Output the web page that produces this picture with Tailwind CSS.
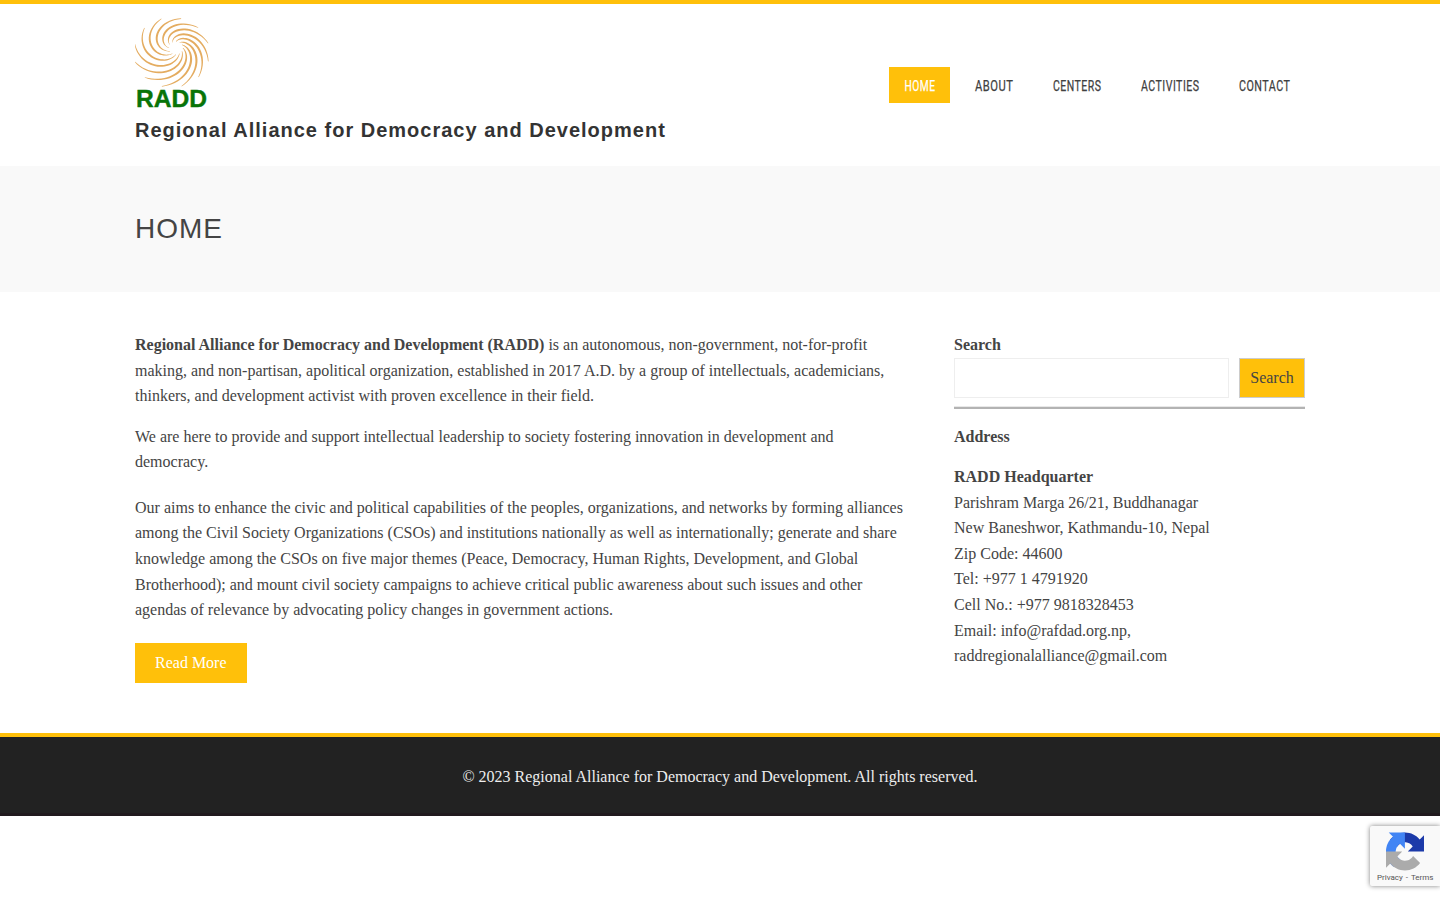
<!DOCTYPE html>
<html lang="en">
<head>
<meta charset="utf-8">
<title>Regional Alliance for Democracy and Development</title>
<script src="https://cdn.jsdelivr.net/npm/@tailwindcss/browser@4"></script>
</head>
<body class="relative h-[900px] overflow-hidden bg-white font-['Liberation_Serif',serif] text-[16px] leading-[25.6px] text-[#444]">
<header class="h-[166px] border-t-4 border-[#ffc00a]">
  <div class="mx-auto flex w-[1170px] justify-between">
    <div class="pt-[14px]">
      <svg class="block" width="74" height="91" viewBox="0 0 74 91">
        <g id="swirl" fill="#e4ac60"></g>
        <text x="1" y="88.500" textLength="71" lengthAdjust="spacingAndGlyphs" class="fill-[#087408] font-['Liberation_Sans',sans-serif] text-[23.5px] font-bold" stroke="#087408" stroke-width=".4">RADD</text>
      </svg>
      <h1 class="mt-[6px] font-['Liberation_Sans',sans-serif] text-[20px] leading-[30px] font-bold tracking-[1px] text-[#333]">Regional Alliance for Democracy and Development</h1>
    </div>
    <nav class="mt-[63px] flex h-9 gap-[10px] font-['Roboto',sans-serif] text-[15px] tracking-[.7px]">
      <a class="bg-[#ffc00a] px-[15px]"><svg width="31" height="36" class="block overflow-visible fill-white stroke-white stroke-[.25]"><text x=".5" y="23.500" textLength="31" lengthAdjust="spacingAndGlyphs">HOME</text></svg></a>
      <a class="px-[15px]"><svg width="38" height="36" class="block overflow-visible fill-[#404040] stroke-[#404040] stroke-[.25]"><text x="0" y="23.500" textLength="38.500" lengthAdjust="spacingAndGlyphs">ABOUT</text></svg></a>
      <a class="px-[15px]"><svg width="48" height="36" class="block overflow-visible fill-[#404040] stroke-[#404040] stroke-[.25]"><text x="0" y="23.500" textLength="48.500" lengthAdjust="spacingAndGlyphs">CENTERS</text></svg></a>
      <a class="px-[15px]"><svg width="58" height="36" class="block overflow-visible fill-[#404040] stroke-[#404040] stroke-[.25]"><text x="0" y="23.500" textLength="58.500" lengthAdjust="spacingAndGlyphs">ACTIVITIES</text></svg></a>
      <a class="px-[15px]"><svg width="51" height="36" class="block overflow-visible fill-[#404040] stroke-[#404040] stroke-[.25]"><text x="0" y="23.500" textLength="51.500" lengthAdjust="spacingAndGlyphs">CONTACT</text></svg></a>
    </nav>
  </div>
</header>
<section class="h-[126px] bg-[#f9f9f9] pt-[42px]">
  <h2 class="mx-auto w-[1170px] font-['Liberation_Sans',sans-serif] text-[28px] leading-[42px] tracking-[1px]">HOME</h2>
</section>
<main class="mx-auto flex h-[441px] w-[1170px] justify-between pt-10">
  <article class="w-[769px] whitespace-nowrap">
    <p><b>Regional Alliance for Democracy and Development (RADD)</b> is an autonomous, non-government, not-for-profit<br>making, and non-partisan, apolitical organization, established in 2017 A.D. by a group of intellectuals, academicians,<br>thinkers, and development activist with proven excellence in their field.</p>
    <p class="mt-[15px]">We are here to provide and support intellectual leadership to society fostering innovation in development and<br>democracy.</p>
    <p class="mt-[19.8px]">Our aims to enhance the civic and political capabilities of the peoples, organizations, and networks by forming alliances<br>among the Civil Society Organizations (CSOs) and institutions nationally as well as internationally; generate and share<br>knowledge among the CSOs on five major themes (Peace, Democracy, Human Rights, Development, and Global<br>Brotherhood); and mount civil society campaigns to achieve critical public awareness about such issues and other<br>agendas of relevance by advocating policy changes in government actions.</p>
    <a class="mt-[20.2px] inline-block h-10 bg-[#ffc00a] px-5 leading-10 text-white">Read More</a>
  </article>
  <aside class="w-[351px]">
    <label class="block font-bold" for="q">Search</label>
    <div class="flex gap-[10px]">
      <input id="q" class="h-10 w-[275px] border border-[#eee] bg-white">
      <button class="h-10 w-[66px] border border-[#ccc] bg-[#ffc00a]">Search</button>
    </div>
    <hr class="mt-[8px] h-[3px] border-t border-[#e8e8e8] bg-[#b3b3b3]">
    <p class="mt-[15px] font-bold">Address</p>
    <p class="mt-[14.800px]"><b>RADD Headquarter</b><br>Parishram Marga 26/21, Buddhanagar<br>New Baneshwor, Kathmandu-10, Nepal<br>Zip Code: 44600<br>Tel: +977 1 4791920<br>Cell No.: +977 9818328453<br>Email: info@rafdad.org.np,<br>raddregionalalliance@gmail.com</p>
  </aside>
</main>
<footer class="h-[83px] border-t-4 border-b-3 border-t-[#ffc00a] border-b-[#211a1e] bg-[#222] pt-[27px] text-center text-[#eee]">© 2023 Regional Alliance for Democracy and Development. All rights reserved.</footer>
<div class="absolute top-[826px] right-0 h-[60px] w-[70px] rounded-l-[2px] bg-[#f9f9f9] shadow-[0_0_5px_gray]">
  <svg class="mt-[6px] ml-4 block" width="38" height="39" viewBox="0 0 64 64">
    <path fill="#1c3aa9" d="M64 31.955l-.033-1.370V4.687l-7.160 7.160C50.948 4.674 42.033.093 32.050.093c-10.400 0-19.622 4.960-25.458 12.640l11.736 11.860a15.550 15.550 0 0 1 4.754-5.334c2.050-1.600 4.952-2.906 8.968-2.906.485 0 .860.057 1.135.163 4.976.393 9.288 3.140 11.828 7.124l-8.307 8.307L64 31.953"/>
    <path fill="#4285f4" d="M31.862.094l-1.370.033H4.594l7.160 7.160C4.580 13.147 0 22.060 0 32.046c0 10.400 4.960 19.622 12.640 25.458L24.500 45.768a15.550 15.550 0 0 1-5.334-4.754c-1.600-2.050-2.906-4.952-2.906-8.968 0-.485.057-.860.163-1.135.393-4.976 3.140-9.288 7.124-11.828l8.307 8.307L31.860.095"/>
    <path fill="#ababab" d="M.001 32.045l.033 1.370v25.898l7.160-7.160c5.860 7.173 14.774 11.754 24.760 11.754 10.400 0 19.622-4.960 25.458-12.640l-11.736-11.860a15.550 15.550 0 0 1-4.754 5.334c-2.050 1.600-4.952 2.906-8.968 2.906-.485 0-.860-.057-1.135-.163-4.976-.393-9.288-3.140-11.828-7.124l8.307-8.307c-10.522.040-22.400.066-27.295-.005"/>
  </svg>
  <p class="mt-[2px] ml-[7px] font-['Roboto',sans-serif] text-[8px] leading-[10px] whitespace-nowrap text-[#555]">Privacy <span class="px-px">-</span> Terms</p>
</div>
<script>
// Tapered spiral arms sweeping clockwise outward from the eye of the logo.
const swirl = document.getElementById('swirl');
const ARMS = 12, STEPS = 28, SWEEP = 2.35;
for (let i = 0; i < ARMS; i++) {
  const outer = [], inner = [];
  for (let s = 0; s <= STEPS; s++) {
    const t = s / STEPS;
    const a = i * 2 * Math.PI / ARMS + t * SWEEP;
    const r = 7 + 31 * Math.pow(t, 1.1);
    const w = 0.35 + 0.85 * Math.sin(Math.PI * t);
    const cx = 41 - 4.5 * t, cy = 30 + 4.5 * t;
    outer.push(`${cx + (r + w) * Math.cos(a)} ${cy + (r + w) * Math.sin(a) * 0.92}`);
    inner.unshift(`${cx + (r - w) * Math.cos(a)} ${cy + (r - w) * Math.sin(a) * 0.92}`);
  }
  const p = document.createElementNS('http://www.w3.org/2000/svg', 'path');
  p.setAttribute('d', 'M' + outer.concat(inner).join('L') + 'Z');
  swirl.appendChild(p);
}
</script>
</body>
</html>
